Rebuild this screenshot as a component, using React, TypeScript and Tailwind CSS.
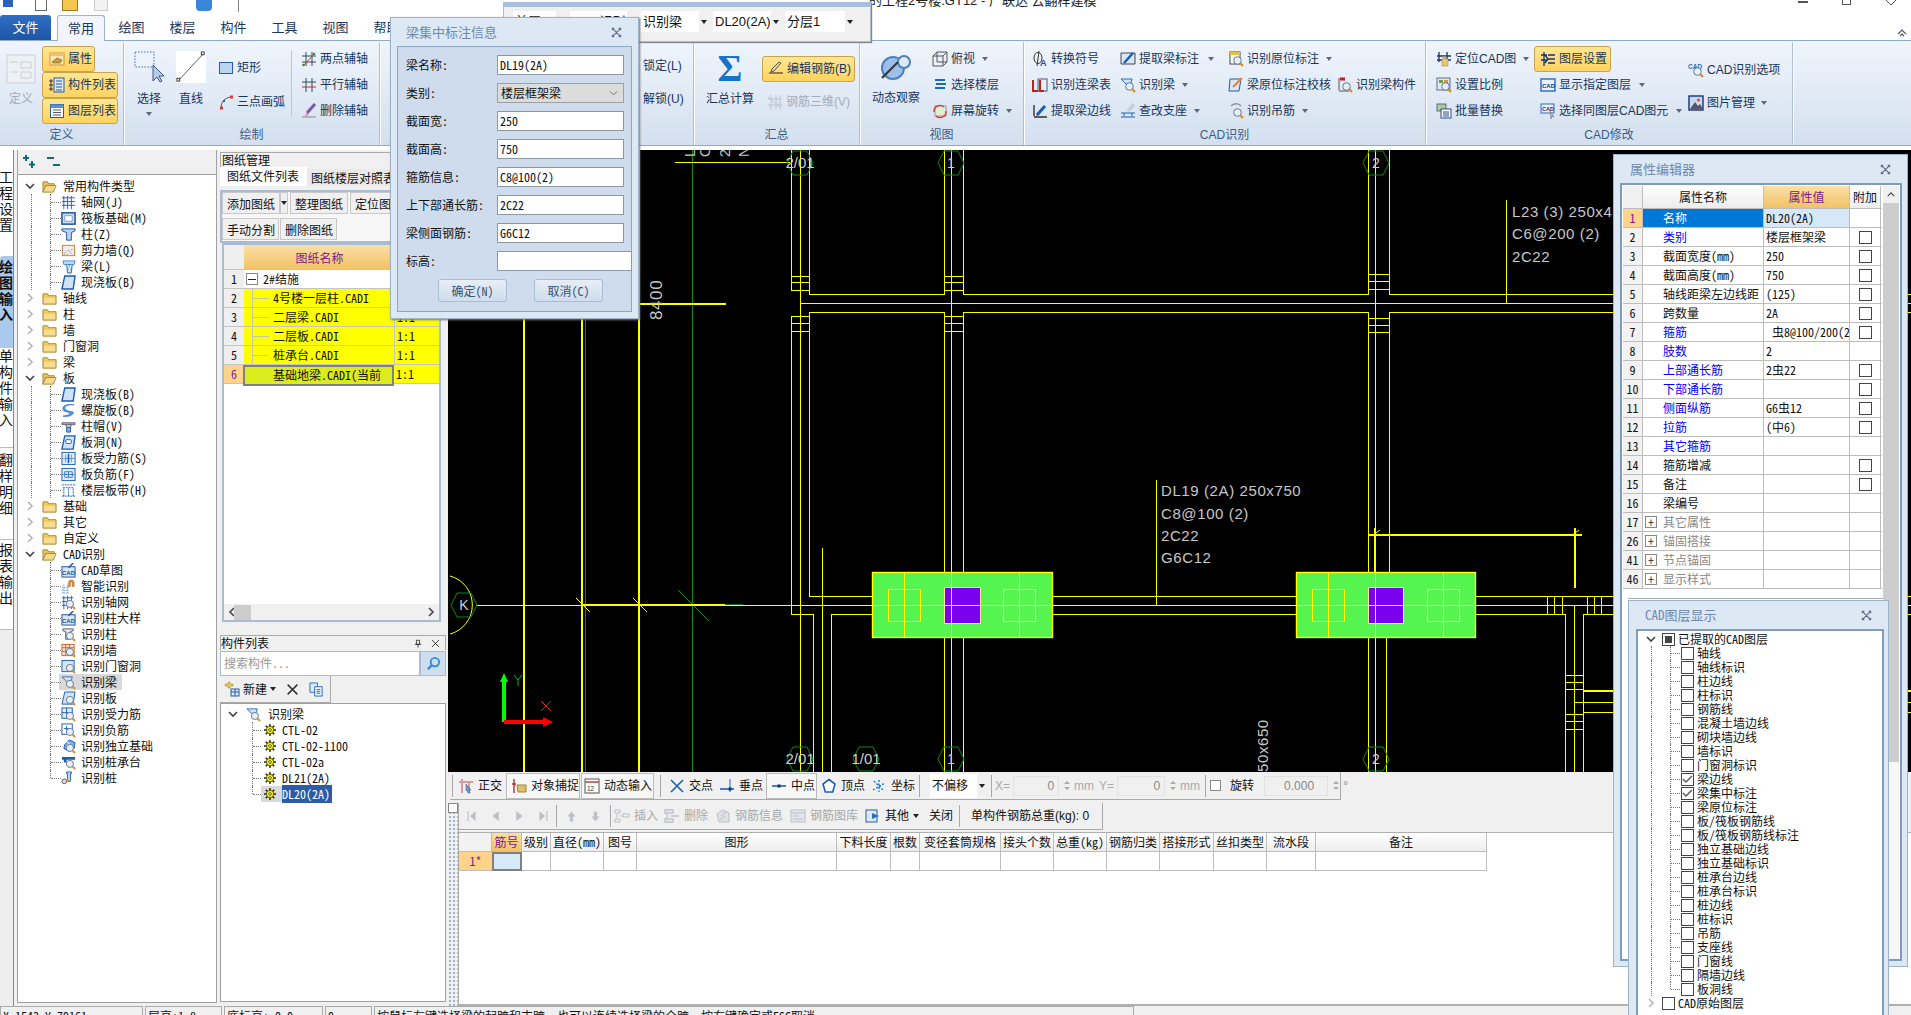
import React from "react";

const ui = "font-['Liberation_Sans','Noto_Sans_CJK_SC',sans-serif]";
const mono = "font-['Noto_Sans_Mono_CJK_SC','Noto_Sans_CJK_SC',monospace]";

const mag = (
  <g>
    <circle cx="9.5" cy="9.5" r="3.8" fill="#e6eef7" stroke="#66788c" />
    <path d="M12.4 12.4 15 15" stroke="#d98e22" strokeWidth="2.2" />
  </g>
);
const cadText = (
  <text x="1" y="13" fontSize="6.5" fontWeight="700" fill="#1c4fa0" fontFamily="Liberation Sans">CAD</text>
);

const icons: Record<string, React.ReactNode> = {
  folderOpen: (<g><path d="M1 3h5l1 2h6v2H4L1 14z" fill="#e9c060" stroke="#a98a3c" /><path d="M4 7h11l-3 7H1z" fill="#f7d98a" stroke="#a98a3c" /></g>),
  folder: (<g><path d="M1 3h5l1 2h8v9H1z" fill="#f2c64f" stroke="#a98a3c" /><path d="M2 7h12v6H2z" fill="#f9dd8e" /></g>),
  grid: <path d="M1 3h14M1 7h14M1 11h14M3 1v14M7 1v14M11 1v14" stroke="#1f5fbf" fill="none" />,
  raft: (<g><rect x="1" y="2" width="14" height="12" fill="#cfe0f5" stroke="#1b4fa0" strokeWidth="1.6" /><rect x="4" y="5" width="8" height="6" fill="#fff" stroke="#1b4fa0" strokeDasharray="1 1" /></g>),
  column: <path d="M1 2h14v2l-4 2v8H6V6L1 4z" fill="#b9d3f2" stroke="#1b4fa0" />,
  wall: (<g><rect x="1.5" y="2.5" width="13" height="11" fill="#f0ece6" stroke="#d07a3a" /><path d="M4 10h1M7 8h1M10 11h1M6 12h1M11 7h1M3 12h1M9 9h1" stroke="#777" /></g>),
  beam: (<g><path d="M2 2h13l-1 4H3z" fill="#bcd6f4" stroke="#4d86c9" /><path d="M6 6h6l-1 9H7z" fill="#8fbbea" stroke="#2f6fb8" /><path d="M7 6l3 8M11 6l-3 8" stroke="#fff" /></g>),
  slab: <path d="M4 1h11l-2 14H1z" fill="#cfe2f8" stroke="#1b5bb0" strokeWidth="1.5" />,
  spiral: <path d="M14 2C7 1 2 4 5 7c3 3 9 1 8 4-1 3-7 4-11 3 4-1 7-1 7-3S2 10 2 6s6-5 12-4z" fill="#4d9be8" stroke="#1b5bb0" strokeWidth=".6" />,
  cap: (<g><path d="M1 4h14v2H1z" fill="#a9b3bf" stroke="#667" /><path d="M5 6h6l-1 3H6z" fill="#cfd6dd" stroke="#667" /><path d="M6 9h4v5H6z" fill="#7fb2e8" stroke="#1b5bb0" /></g>),
  hole: (<g><path d="M4 1h11l-2 14H1z" fill="#cfe2f8" stroke="#1b5bb0" strokeWidth="1.4" /><rect x="5" y="5" width="6" height="4" rx="1" fill="#fff" stroke="#1b5bb0" /></g>),
  rebarS: (<g><rect x="1" y="1.5" width="14" height="13" fill="#e0ecf9" stroke="#1b5bb0" /><path d="M5 4v8M11 4v8M2 8h12" stroke="#5a94d8" /><path d="M8 3v10" stroke="#1b5bb0" strokeWidth="1.6" /></g>),
  rebarF: (<g><rect x="1" y="1.5" width="14" height="13" fill="#e0ecf9" stroke="#1b5bb0" /><path d="M4 5h8v6H4zM8 5v6M2 8h12" stroke="#3a78c8" fill="none" /></g>),
  band: <path d="M1 2h14M1 14h14M3 14V5M8 14V5M13 14V5M2 5h12" stroke="#1b5bb0" fill="none" strokeDasharray="2 1" />,
  cadDraft: (<g><rect x="1" y="4" width="14" height="11" fill="#d5e6f8" stroke="#1b4fa0" />{cadText}<path d="M8 5l5-5" stroke="#1b4fa0" strokeWidth="1.5" /></g>),
  smart: (<g><path d="M1 9h8M1 12h8M1 15h8M3 6v9M7 6v9" stroke="#4d8ad0" strokeDasharray="1 1" /><path d="M8 8V4a3 3 0 0 1 6 0v4h-2V4a1 1 0 0 0-2 0v4z" fill="#e88a20" stroke="#a0581a" strokeWidth=".5" /></g>),
  recGrid: (<g><path d="M1 3h12M1 7h12M1 11h12M3 1v14M7 1v14M11 1v14" stroke="#1f5fbf" fill="none" />{mag}</g>),
  recCad: (<g><rect x="1" y="4" width="14" height="11" fill="#d5e6f8" stroke="#1b4fa0" />{cadText}<path d="M8 5l5-5" stroke="#1b4fa0" strokeWidth="1.5" /></g>),
  recCol: (<g><path d="M2 2h11v2l-3 1v8H5V5L2 4z" fill="#dde8f4" stroke="#556" />{mag}</g>),
  recWall: (<g><rect x="1" y="1.5" width="13" height="12" fill="#f8e2d0" stroke="#d0602a" /><path d="M1 5h13M1 9h13M5 1.5v12M9 1.5v12" stroke="#d0602a" />{mag}</g>),
  recDoor: (<g><rect x="1" y="1.5" width="13" height="12" fill="#d7e6f7" stroke="#1b5bb0" />{mag}</g>),
  recBeam: (<g><path d="M1 2h11l-1 4-5 1z" fill="#cfe2f8" stroke="#2f6fb8" />{mag}</g>),
  recSlab: (<g><path d="M4 1h11l-2 13H1z" fill="#cfe2f8" stroke="#1b5bb0" />{mag}</g>),
  recS: (<g><rect x="1" y="1" width="11" height="11" fill="#e0ecf9" stroke="#1b5bb0" /><path d="M1 6h11M6 1v11" stroke="#1b5bb0" />{mag}</g>),
  recF: (<g><rect x="1" y="1" width="11" height="11" fill="#fff" stroke="#1b5bb0" /><path d="M3 6h7M6 3v7" stroke="#1b5bb0" />{mag}</g>),
  recIso: (<g><path d="M4 6l5-5 6 3-1 6-6 3-5-3z" fill="#7fb2e8" stroke="#1b4fa0" /><path d="M6 3l7 5" stroke="#fff" />{mag}</g>),
  recCap: (<g><path d="M1 2h14v3H6v3H3V5H1z" fill="#1b5bb0" />{mag}</g>),
  recPile: (<g><path d="M6 1h5v2h-1v8H7V3H6z" fill="#cfe2f8" stroke="#1b5bb0" /><circle cx="3.5" cy="11" r="2.5" fill="#dde" stroke="#556" /><path d="M5 10h3" stroke="#d98e22" strokeWidth="2" /></g>),
  gear: (<g><path d="M8 0v16M0 8h16M2.300 2.300l11.400 11.400M13.700 2.300 2.300 13.700" stroke="#222" strokeWidth="2" /><circle cx="8" cy="8" r="5" fill="#f4f000" stroke="#3a3a00" /><circle cx="8" cy="8" r="1.8" fill="#fff" stroke="#333" /></g>),
  prop: (<g><rect x="1" y="2" width="14" height="12" fill="#fbe6bd" stroke="#d9902a" /><path d="M1 2h14v3H1z" fill="#f3c06a" /><path d="M3 11l5-4 5 2-2 3H4z" fill="#c99a3c" stroke="#7b5a16" strokeWidth=".6" /></g>),
  list: (<g><path d="M1 3h2v2H1zM1 7h2v2H1zM1 11h2v2H1z" fill="none" stroke="#334" /><rect x="5" y="1" width="10" height="14" fill="#dbe9f8" stroke="#2a5a9a" /><path d="M7 4h6M7 7h6M7 10h6M7 13h6" stroke="#2a5a9a" /></g>),
  layer: (<g><rect x="1.5" y="1.5" width="13" height="13" fill="#fff" stroke="#2a5a9a" /><path d="M1.5 1.5h13V5h-13z" fill="#5d8fd0" /><path d="M4 7h8M4 9.5h8M4 12h8" stroke="#557" /></g>),
  rect: <rect x="1.5" y="2.5" width="13" height="11" fill="#bcd4f4" stroke="#2a5aa8" />,
  arc: (<g><path d="M3 14C3 8 7 3 14 3" stroke="#555" fill="none" /><rect x="12" y="1.5" width="3" height="3" fill="#e33" /><rect x="2" y="12.5" width="3" height="3" fill="#e33" /><rect x="5" y="6" width="2" height="2" fill="#2a5aa8" /></g>),
  axis2: (<g><path d="M5 1v14M11 1v14M1 5h14M1 11h14" stroke="#2f4f5f" /><path d="M2 15 14 2" stroke="#e03030" /><circle cx="2.5" cy="14" r="1.3" fill="#4a8a30" /><circle cx="13" cy="3" r="1.3" fill="#4a8a30" /></g>),
  axisP: (<g><path d="M5 1v14M11 1v14M1 5h14" stroke="#2f4f5f" fill="none" /><path d="M1 10h14" stroke="#c03030" /></g>),
  axisD: (<g><path d="M1 14h14" stroke="#889" /><path d="M14 1 6 10" stroke="#7a5ab0" strokeWidth="3" /><path d="M6 10l-3 4 5-2z" fill="#e88aa0" /></g>),
  edit: (<g><path d="M1 12h14" stroke="#222" /><path d="M13 2 6 10l-3 1 1-3 7-7z" fill="#e8d9a0" stroke="#555" /></g>),
  r3d: <path d="M1 5h14M1 11h14M4 1v14M9 1v14M13 1v14M1 3l13 11" stroke="#c0c4ca" fill="none" />,
  orbit: (<g><circle cx="6.5" cy="8" r="5.5" fill="#9cc0ea" stroke="#4d7fb8" /><circle cx="12" cy="5" r="3" fill="#dbe9f8" stroke="#4d7fb8" /><path d="M1 13 9 5" stroke="#333" strokeWidth="1" /></g>),
  top: (<g><path d="M5 1h10v10H5z" fill="#e8f0fa" stroke="#555" /><path d="M1 5h10v10H1zM1 5l4-4M11 5l4-4M11 15l4-4" fill="none" stroke="#555" /></g>),
  floor: <path d="M3 3h10M4 7h10M3 11h10" stroke="#1b6bb0" strokeWidth="2" fill="none" />,
  rotate: (<g><rect x="3" y="3" width="11" height="10" fill="#dff0d0" stroke="#99a" /><path d="M2 9a6 6 0 0 1 10-5M14 8a6 6 0 0 1-10 5" stroke="#e03030" strokeWidth="1.4" fill="none" /></g>),
  conv: (<g><ellipse cx="6" cy="7" rx="4" ry="5.5" fill="none" stroke="#333" /><path d="M7 0 5 15" stroke="#333" /><text x="8" y="15" fontSize="9" fontWeight="700" fill="#1c4fa0" fontFamily="Liberation Sans">A</text></g>),
  lian: (<g><rect x="6" y="2" width="9" height="12" fill="#e8f0fa" stroke="#557" /><path d="M1 3v11h5M8 3v11h4" stroke="#c02020" strokeWidth="2" fill="none" /></g>),
  extEdge: (<g><path d="M2 2v11M2 14h13" stroke="#333" strokeWidth="1.4" /><path d="M5 12 13 3" stroke="#1c5fb0" strokeWidth="3" /><path d="M5 12l-2 2 3-1z" fill="#c03030" /></g>),
  extLabel: (<g><path d="M1 2h14v11H1z" fill="#d8e6f6" stroke="#445" /><path d="M4 12 13 2" stroke="#1c5fb0" strokeWidth="2.5" /></g>),
  checkSup: (<g><path d="M1 10h14M4 13v-3M12 13v-3M1 14h14" stroke="#1c5fb0" /><path d="M14 1 8 8" stroke="#c8ccd4" strokeWidth="3.5" /></g>),
  orig: (<g><rect x="2" y="1" width="10" height="12" fill="#fff" stroke="#445" /><path d="M2 1h10v3H2z" fill="#e8c040" />{mag}</g>),
  origCheck: (<g><path d="M2 2h11l-2 12H1z" fill="#d8e6f6" stroke="#1c5fb0" /><path d="M5 10 14 1" stroke="#e08040" strokeWidth="2" /></g>),
  hanger: (<g><path d="M3 3c3-3 8-3 10 0" stroke="#8a96a4" fill="none" strokeWidth="1.5" />{mag}</g>),
  recB: (<g><path d="M2 1v12M2 14h10" stroke="#555" /><path d="M3 2h5" stroke="#c02020" strokeWidth="3" />{mag}</g>),
  locate: (<g><path d="M3 1v10M11 1v10M1 5h14M1 9h14" stroke="#1c2f7a" strokeWidth="1.3" /><path d="M6 15V8h1V5h1v3h1V5h1v3h2v7z" fill="#e8c870" stroke="#a08030" strokeWidth=".5" /></g>),
  scale: (<g><rect x="1" y="1" width="13" height="12" fill="#dbe9f8" stroke="#668" /><rect x="3" y="3" width="4" height="3" fill="#6aa04a" /><rect x="8" y="3" width="4" height="3" fill="#e09040" />{mag}</g>),
  batch: (<g><rect x="1" y="1" width="9" height="7" fill="#a8d090" stroke="#668" /><rect x="5" y="6" width="10" height="9" fill="#fff" stroke="#2a4a8a" /><path d="M7 9h6M7 11h6M7 13h6" stroke="#2a4a8a" /></g>),
  layerSet: <path d="M4 1v14M1 4h6M1 9h6M8 4h7M8 8h7M8 12h7M5 4l3 4-3 4" stroke="#14307a" strokeWidth="1.3" fill="none" />,
  showL: (<g><rect x="1" y="2" width="14" height="12" fill="#e8f0fa" stroke="#2a6ac0" strokeWidth="1.4" /><text x="2" y="11" fontSize="6" fontWeight="700" fill="#14307a" fontFamily="Liberation Sans">CAD</text></g>),
  sameL: (<g><rect x="1" y="1" width="13" height="9" fill="#e8f0fa" stroke="#2a6ac0" /><text x="2" y="8" fontSize="5.5" fontWeight="700" fill="#14307a" fontFamily="Liberation Sans">CAD</text><path d="M10 8l4 6-2-1-1 3z" fill="#bbb" stroke="#666" strokeWidth=".5" /></g>),
  cadOpt: (<g><text x="0" y="7" fontSize="6.5" fontWeight="700" fill="#2a6ac0" fontFamily="Liberation Sans">CAD</text>{mag}</g>),
  pic: (<g><rect x="1" y="1" width="14" height="14" fill="#c8daf0" stroke="#14307a" strokeWidth="1.4" /><circle cx="10.5" cy="5" r="1.6" fill="#e05030" /><path d="M2 14l5-7 3 4 2-2 3 5z" fill="#556" /></g>),
  ortho: (<g><path d="M1 4h14M4 1v14M11 4v11" stroke="#d89a9a" strokeWidth="2" /><path d="M8 6l5 6-2 0 1 3-2 0-1-3-1 1z" fill="#6d9ad8" stroke="#335" strokeWidth=".4" /></g>),
  snap: (<g><path d="M3 1v14M1 6h4" stroke="#b03030" strokeWidth="1.4" /><path d="M6 7h9v7H7z" fill="#e0c070" stroke="#a08030" /></g>),
  dyn: (<g><rect x="1" y="1" width="14" height="14" fill="#fff" stroke="#555" /><path d="M1 4h14" stroke="#c03030" strokeWidth="1.4" /><text x="3" y="13" fontSize="6.5" fill="#333" fontFamily="Liberation Sans">12</text></g>),
  cross: <path d="M2 2l12 12M14 2 2 14" stroke="#1c5fb0" strokeWidth="1.6" />,
  perp: (<g><path d="M1 11h14" stroke="#1c5fb0" strokeWidth="1.6" /><path d="M11 1v13" stroke="#1c5fb0" /><rect x="9.5" y="9.5" width="3" height="3" fill="#14307a" /></g>),
  mid: (<g><path d="M1 8h14" stroke="#1c5fb0" strokeWidth="1.6" /><rect x="6.5" y="6.5" width="3" height="3" fill="#14307a" /></g>),
  vert: <path d="M8 1.5l6 4.5-2.3 8H4.3L2 6z" fill="#fff" stroke="#1c5fb0" strokeWidth="1.6" />,
  coord: <path d="M8 2v12M2 12 14 5M3 3l10 10" stroke="#1c7ad8" strokeWidth="1.4" strokeDasharray="2 1.5" />,
  first: <path d="M3 2v12h1.5V2zM13 2 6 8l7 6z" fill="#bbbfc6" />,
  prev: <path d="M12 2 4 8l8 6z" fill="#bbbfc6" />,
  next: <path d="M4 2l8 6-8 6z" fill="#bbbfc6" />,
  last: <path d="M3 2l7 6-7 6zM11.5 2v12H13V2z" fill="#bbbfc6" />,
  up: <path d="M8 2l5 6h-3v6H6V8H3z" fill="#bbbfc6" />,
  down: <path d="M8 14l5-6h-3V2H6v6H3z" fill="#bbbfc6" />,
  ins: <path d="M1 2h5v3H1zM1 11h5v3H1zM9 6h6v3H9zM3 6v4M6 8h3" stroke="#bbbfc6" fill="none" />,
  del: <path d="M1 2h8v3H1zM1 11h8v3H1zM3 6v4M7 8h8" stroke="#bbbfc6" fill="none" strokeWidth="1.3" />,
  rInfo: <path d="M2 6l6-4 6 3v9H4zM6 8l5-4M5 12l5-4" stroke="#bbbfc6" fill="#dfe1e4" />,
  rLib: (<g><rect x="1" y="2" width="14" height="12" fill="#e4e6e9" stroke="#bbbfc6" /><path d="M1 5h14M3 8h6M3 11h10" stroke="#bbbfc6" /></g>),
  other: (<g><rect x="1" y="2" width="11" height="12" fill="#dbe9f8" stroke="#2a5a9a" /><path d="M7 5l7 3-7 3z" fill="#2a6ac0" /></g>),
  plus: <path d="M4 1v6M1 4h6M10 7v7M7 10.500h6" stroke="#0c6f6f" strokeWidth="2" fill="none" />,
  minus: <path d="M1 4h7M7 11h7" stroke="#0c6f6f" strokeWidth="2" fill="none" />,
  newIc: (<g><path d="M2 2h3V0h2v2h3v2H7v2H5V4H2z" fill="#f2c64f" stroke="#a08030" strokeWidth=".5" transform="translate(-1 1)" /><rect x="7" y="8" width="8" height="7" fill="#dbe9f8" stroke="#2a5a9a" /><path d="M7 11h8M11 8v7" stroke="#2a5a9a" /></g>),
  delX: <path d="M2 2l12 12M14 2 2 14" stroke="#333" strokeWidth="1.8" />,
  copy: (<g><path d="M1 1h8v10H1z" fill="#dbe9f8" stroke="#2a6ac0" /><path d="M6 5h8v10H6z" fill="#eef4fb" stroke="#2a6ac0" /><path d="M8 8h4M8 10h4M8 12h4" stroke="#2a6ac0" /></g>),
  search: (<g><circle cx="9.500" cy="6.500" r="4.500" fill="none" stroke="#2a90e0" strokeWidth="2" /><path d="M6 10l-4 4" stroke="#2a90e0" strokeWidth="2.500" /></g>),
};

function I({ n, c = "w-4 h-4" }: { n: string; c?: string }) {
  return (
    <svg viewBox="0 0 16 16" className={`${c} shrink-0`}>
      {icons[n]}
    </svg>
  );
}

function Caret({ c = "text-[#5a6a7c]" }: { c?: string }) {
  return <span className={`block w-0 h-0 border-x-[3px] border-x-transparent border-t-[4px] border-t-current ${c}`} />;
}

function RB({ n, t, arrow, on, off, c = "" }: { n: string; t: string; arrow?: string; on?: boolean; off?: boolean; c?: string }) {
  const active = on ? "bg-linear-to-b from-[#ffe792] to-[#ffd35e] border border-[#c8a24c] rounded-[3px]" : "";
  return (
    <div className={`flex items-center h-[26px] shrink-0 whitespace-nowrap ${active} ${off ? "text-[#a5adb8]" : ""} ${c}`}>
      <I n={n} />
      <span className="ml-[3px]">{t}</span>
      {arrow && <span className={arrow}><Caret /></span>}
    </div>
  );
}

function Group({ w, label, children }: { w: string; label: string; children: React.ReactNode }) {
  return (
    <div className={`${w} shrink-0 h-full flex flex-col border-r border-[#aebfd4] shadow-[1px_0_0_#fff]`}>
      <div className="flex-1 flex min-h-0">{children}</div>
      <div className="h-[17px] mb-[1px] shrink-0 text-center text-[#3e5c82] leading-[17px]">{label}</div>
    </div>
  );
}

function Ribbon() {
  return (
    <div className="h-[106px] pt-px flex border-y border-[#8fa9c8] bg-linear-to-b from-[#f0f5fc] to-[#d3e0ef] text-[12px] text-[#17365c]">
      <Group w="w-[124px]" label="定义">
        <div className="w-[42px] flex flex-col items-center pt-[12px] text-[#a5adb8]">
          <svg viewBox="0 0 30 30" className="w-[30px] h-[30px] shrink-0"><rect x="1" y="1" width="28" height="28" fill="#eef0f3" stroke="#ccd2d9" /><path d="M4 8h8M15 8h10v6H15zM4 18h8M15 18h10v6H15z" stroke="#c8cfd8" fill="none" /></svg>
          <span className="mt-[6px]">定义</span>
        </div>
        <div className="pt-[4px] flex flex-col items-start">
          <RB n="prop" t="属性" on c="w-[53px] pl-[6px] h-[25px]" />
          <RB n="list" t="构件列表" on c="w-[76px] pl-[6px]" />
          <RB n="layer" t="图层列表" on c="w-[76px] pl-[6px]" />
        </div>
      </Group>
      <Group w="w-[256px]" label="绘制">
        <div className="w-[30px] ml-[10px] pt-[9px] flex flex-col items-center">
          <svg viewBox="0 0 30 36" className="w-[30px] h-[36px] shrink-0"><rect x="1" y="1" width="19" height="15" fill="#edf3fb" stroke="#3a70b8" strokeDasharray="1.500 1.500" /><path d="M19 14v16l4-4 3 5 2-1-3-5h5z" fill="#b8cce8" stroke="#3a5a8a" /></svg>
          <span className="mt-[3px]">选择</span>
          <span className="mt-[4px] h-[5px] block"><Caret /></span>
        </div>
        <div className="w-[32px] ml-[11px] pt-[9px] flex flex-col items-center">
          <svg viewBox="0 0 32 34" className="w-[32px] h-[32px] shrink-0"><rect width="32" height="34" fill="#fff" /><path d="M3 31 29 3" stroke="#555" /><rect x="1" y="29" width="3" height="3" fill="#fff" stroke="#333" /><rect x="27" y="1" width="3" height="3" fill="#fff" stroke="#333" /></svg>
          <span className="mt-[7px]">直线</span>
        </div>
        <div className="ml-[11px] w-[74px] mt-[9px] h-[66px] pt-[4px] flex flex-col gap-[8px] border-r border-[#b9c6d6]">
          <RB n="rect" t="矩形" />
          <RB n="arc" t="三点画弧" />
        </div>
        <div className="ml-[9px] pt-[4px] flex flex-col">
          <RB n="axis2" t="两点辅轴" />
          <RB n="axisP" t="平行辅轴" />
          <RB n="axisD" t="删除辅轴" />
        </div>
      </Group>
      <Group w="w-[314px]" label="修改">
        <div className="ml-[263px] pt-[11px] flex flex-col whitespace-nowrap">
          <span className="h-[33px] leading-[26px]">锁定(L)</span>
          <span className="h-[33px] leading-[26px]">解锁(U)</span>
        </div>
      </Group>
      <Group w="w-[166px]" label="汇总">
        <div className="w-[60px] pt-[7px] ml-[6px] flex flex-col items-center">
          <span className="h-[38px] shrink-0 text-[38px] leading-[38px] font-['Liberation_Serif'] font-bold text-[#1573c8]">Σ</span>
          <span className="mt-[3px] whitespace-nowrap">汇总计算</span>
        </div>
        <div className="ml-[2px] pt-[14px] flex flex-col gap-[7px]">
          <RB n="edit" t="编辑钢筋(B)" on c="w-[93px] pl-[5px]" />
          <RB n="r3d" t="钢筋三维(V)" off c="pl-[5px]" />
        </div>
      </Group>
      <Group w="w-[164px]" label="视图">
        <div className="w-[48px] ml-[12px] pt-[10px] flex flex-col items-center">
          <I n="orbit" c="w-[32px] h-[32px]" />
          <span className="mt-[5px] whitespace-nowrap">动态观察</span>
        </div>
        <div className="ml-[12px] pt-[4px] flex flex-col">
          <RB n="top" t="俯视" arrow="ml-[7px]" />
          <RB n="floor" t="选择楼层" />
          <RB n="rotate" t="屏幕旋转" arrow="ml-[7px]" />
        </div>
      </Group>
      <Group w="w-[402px]" label="CAD识别">
        <div className="ml-[8px] pt-[4px] w-[88px] flex flex-col">
          <RB n="conv" t="转换符号" />
          <RB n="lian" t="识别连梁表" />
          <RB n="extEdge" t="提取梁边线" />
        </div>
        <div className="pt-[4px] w-[108px] flex flex-col">
          <RB n="extLabel" t="提取梁标注" arrow="ml-[9px]" />
          <RB n="recBeam" t="识别梁" arrow="ml-[7px]" />
          <RB n="checkSup" t="查改支座" arrow="ml-[7px]" />
        </div>
        <div className="pt-[4px] w-[107px] flex flex-col">
          <RB n="orig" t="识别原位标注" arrow="ml-[7px]" />
          <RB n="origCheck" t="梁原位标注校核" />
          <RB n="hanger" t="识别吊筋" arrow="ml-[7px]" />
        </div>
        <div className="pt-[30px] ml-[2px]">
          <RB n="recB" t="识别梁构件" />
        </div>
      </Group>
      <Group w="w-[367px]" label="CAD修改">
        <div className="ml-[10px] pt-[4px] w-[98px] flex flex-col">
          <RB n="locate" t="定位CAD图" arrow="ml-[7px]" />
          <RB n="scale" t="设置比例" />
          <RB n="batch" t="批量替换" />
        </div>
        <div className="pt-[4px] w-[154px] flex flex-col items-start">
          <RB n="layerSet" t="图层设置" on c="w-[77px] pl-[5px]" />
          <RB n="showL" t="显示指定图层" arrow="ml-[8px]" c="pl-[6px]" />
          <RB n="sameL" t="选择同图层CAD图元" arrow="ml-[8px]" c="pl-[6px]" />
        </div>
        <div className="pt-[15px] flex flex-col gap-[7px]">
          <RB n="cadOpt" t="CAD识别选项" />
          <RB n="pic" t="图片管理" arrow="ml-[6px]" />
        </div>
      </Group>
    </div>
  );
}

function TopBar() {
  const tabs = ["绘图", "楼层", "构件", "工具", "视图", "帮助"];
  return (
    <div className="h-[40px] relative bg-white text-[13px] text-[#1f3657]">
      <div className="h-[15px] flex items-center pl-[3px] gap-[10px] overflow-hidden">
        <span className="w-[10px] h-[7px] -mt-[8px] bg-[#2a62b8]" />
        <span className="ml-[12px] w-[12px] h-[14px] -mt-[8px] border border-[#667] bg-white" />
        <span className="ml-[5px] w-[16px] h-[14px] -mt-[8px] border border-[#a07a20] bg-[#f2c64f]" />
        <span className="ml-[6px] w-[14px] h-[14px] -mt-[8px] border border-[#ccc] bg-[#f2f2f2]" />
        <span className="ml-[78px] w-[16px] h-[14px] -mt-[8px] rounded-sm bg-[#3a86d8]" />
        <span className="ml-[16px] w-px h-[12px] -mt-[4px] bg-[#888]" />
      </div>
      <div className="absolute left-[869px] top-[-9px] text-[13px] text-[#222] whitespace-nowrap">的工程2号楼.GT12 - 广联达 云翻样建模</div>
      <div className="absolute right-[14px] top-[0px] flex items-start gap-[34px]">
        <span className="w-[10px] h-[2px] mt-[1px] bg-[#555]" />
        <span className="w-[9px] h-[5px] border-x border-b border-[#555]" />
        <svg viewBox="0 0 12 6" className="w-[12px] h-[6px]"><path d="M1 0l5 5 5-5" stroke="#555" fill="none" /></svg>
      </div>
      <svg viewBox="0 0 10 10" className="absolute left-[1897px] top-[27px] w-[10px] h-[10px]"><path d="M1 7l4-4 4 4M3 9l2-2 2 2" stroke="#4a5a70" fill="none" strokeWidth="1.2" /></svg>
      <div className="flex items-end h-[25px]">
        <div className="w-[51px] h-[25px] rounded-t-[3px] bg-linear-to-b from-[#2f6ec4] to-[#1f56a6] text-white text-center leading-[25px]">文件</div>
        <div className="ml-[6px] w-[48px] h-[26px] -mb-px z-10 rounded-t-[3px] border border-b-0 border-[#9cb4d0] bg-[#f2f6fc] text-center leading-[25px]">常用</div>
        <div className="flex ml-[1px]">
          {tabs.map((t) => (
            <div key={t} className="w-[51px] text-center leading-[25px]">{t}</div>
          ))}
        </div>
      </div>
    </div>
  );
}

type Node = { t: string; lv: 0 | 1; ic: string; open?: boolean; outer?: boolean; sel?: boolean; last?: boolean };
const tree: Node[] = [
  { t: "常用构件类型", lv: 0, ic: "folderOpen", open: true },
  ...[["轴网(J)", "grid"], ["筏板基础(M)", "raft"], ["柱(Z)", "column"], ["剪力墙(Q)", "wall"], ["梁(L)", "beam"], ["现浇板(B)", "slab"]].map(([t, ic]) => ({ t, ic, lv: 1 as const, outer: true })),
  ...["轴线", "柱", "墙", "门窗洞", "梁"].map((t) => ({ t, lv: 0 as const, ic: "folder" })),
  { t: "板", lv: 0, ic: "folderOpen", open: true },
  ...[["现浇板(B)", "slab"], ["螺旋板(B)", "spiral"], ["柱帽(V)", "cap"], ["板洞(N)", "hole"], ["板受力筋(S)", "rebarS"], ["板负筋(F)", "rebarF"], ["楼层板带(H)", "band"]].map(([t, ic]) => ({ t, ic, lv: 1 as const, outer: true })),
  ...["基础", "其它", "自定义"].map((t) => ({ t, lv: 0 as const, ic: "folder" })),
  { t: "CAD识别", lv: 0, ic: "folderOpen", open: true },
  ...[["CAD草图", "cadDraft"], ["智能识别", "smart"], ["识别轴网", "recGrid"], ["识别柱大样", "recCad"], ["识别柱", "recCol"], ["识别墙", "recWall"], ["识别门窗洞", "recDoor"], ["识别梁", "recBeam"], ["识别板", "recSlab"], ["识别受力筋", "recS"], ["识别负筋", "recF"], ["识别独立基础", "recIso"], ["识别桩承台", "recCap"], ["识别桩", "recPile"]].map(([t, ic]) => ({ t, ic, lv: 1 as const, sel: t === "识别梁", last: t === "识别桩" })),
];

function Chev({ open }: { open?: boolean }) {
  return (
    <svg viewBox="0 0 10 10" className="w-[10px] h-[10px] shrink-0">
      <path d={open ? "M1 3l4 4 4-4" : "M3 1l4 4-4 4"} stroke={open ? "#444" : "#b5b5b5"} strokeWidth="1.6" fill="none" />
    </svg>
  );
}

function TreePanel() {
  return (
    <div className="w-[200px] ml-[3px] flex flex-col h-[853px] border-x border-b border-[#a0a0a0] bg-white">
      <div className="h-[25px] bg-[#f0f0f0] border-b border-[#a0a0a0] flex items-center pl-[4px] gap-[8px]">
        <I n="plus" c="w-[16px] h-[16px]" />
        <I n="minus" c="w-[16px] h-[16px]" />
      </div>
      <div className={`pt-[3px] text-[12px] text-[#111] ${mono}`}>
        {tree.map((n, i) => (
          <div key={i} className="relative flex items-center h-[16px]">
            {n.lv === 0 ? (
              <>
                <span className="ml-[7px]"><Chev open={n.open} /></span>
                <span className="ml-[7px]"><I n={n.ic} c="w-[15px] h-[15px]" /></span>
                <span className="ml-[6px] leading-[16px]">{n.t}</span>
              </>
            ) : (
              <>
                {n.outer && <span className="absolute left-[13px] top-0 h-[16px] border-l border-dotted border-[#777]" />}
                <span className={`absolute left-[32px] top-0 border-l border-dotted border-[#777] ${n.last ? "h-[8px]" : "h-[16px]"}`} />
                <span className="absolute left-[33px] top-[8px] w-[10px] border-t border-dotted border-[#777]" />
                <span className={`ml-[41px] h-[16px] flex items-center pl-[2px] w-[fit-content] ${n.sel ? "bg-[#d9d9d9] pr-[5px]" : ""}`}>
                  <I n={n.ic} c="w-[15px] h-[15px]" />
                  <span className="ml-[5px] leading-[16px] whitespace-nowrap">{n.t}</span>
                </span>
              </>
            )}
          </div>
        ))}
      </div>
    </div>
  );
}

function SideTabs() {
  const one = (s: string) => (
    <div className="flex flex-col items-start">
      {s.split("").map((ch, i) => (
        <span key={i} className="h-[16px] text-[14px] leading-[16px] -ml-[1px]">{ch}</span>
      ))}
    </div>
  );
  return (
    <div className="w-[14px] shrink-0 bg-[#eeeeee] border-r border-[#888] flex flex-col text-[#111] overflow-hidden">
      <div className="h-[106px] bg-white pt-[19px]">{one("工程设置")}</div>
      <div className="h-[92px] bg-[#a9c9ef] pt-[3px] font-bold rounded-tl-[4px]">{one("绘图输入")}</div>
      <div className="h-[100px] bg-white border-b border-[#bbb]">{one("单构件输入")}</div>
      <div className="h-[92px] bg-white pt-[4px] border-b border-[#bbb]">{one("翻样明细")}</div>
      <div className="h-[90px] bg-white pt-[2px] border-b border-[#bbb]">{one("报表输出")}</div>
      <div className="flex-1" />
    </div>
  );
}

const rows = [
  { n: "2", t: "4号楼一层柱.CADI" },
  { n: "3", t: "二层梁.CADI" },
  { n: "4", t: "二层板.CADI" },
  { n: "5", t: "桩承台.CADI" },
];

function Btn({ t, c = "" }: { t: string; c?: string }) {
  return <div className={`h-[22px] px-[4px] bg-[#f0f0f0] border border-[#c8c8c8] leading-[21px] whitespace-nowrap ${c}`}>{t}</div>;
}

function MiddleColumn() {
  return (
    <div className={`w-[228px] ml-[3px] shrink-0 flex flex-col text-[12px] text-[#111] ${mono}`}>
      <div className="h-[15px] mt-[2px] mr-[2px] bg-[#f0f0f0] border border-[#aaa] border-b-0 leading-[14px] pl-[1px]">图纸管理</div>
      <div className="flex h-[19px] items-end mr-[2px]">
        <div className="w-[87px] h-[19px] bg-white pl-[7px] leading-[18px]">图纸文件列表</div>
        <div className="flex-1 overflow-hidden h-[17px] bg-[#eaeaea] pl-[4px] leading-[17px] whitespace-nowrap">图纸楼层对照表</div>
      </div>
      <div className="border-2 border-[#a9bcd4] border-b-0 border-r-0 mt-[4px] mr-[2px] bg-[#f7f7f7] h-[51px] overflow-hidden">
        <div className="flex h-[26px] gap-[2px]">
          <Btn t="添加图纸" c="w-[58px]" />
          <div className="w-[8px] -ml-[2px] h-[22px] bg-[#f0f0f0] border border-[#c8c8c8] flex items-center justify-center"><Caret c="text-[#222]" /></div>
          <Btn t="整理图纸" c="w-[58px]" />
          <Btn t="定位图纸" c="w-[60px]" />
        </div>
        <div className="flex gap-[1px]">
          <Btn t="手动分割" c="w-[57px]" />
          <Btn t="删除图纸" c="w-[57px]" />
        </div>
      </div>
      <div className="h-[2px] mr-[2px] bg-[#a9bcd4]" />
      <div className="ml-[2px] mr-[7px] h-[379px] border-2 border-[#a9bcd4] bg-white flex flex-col overflow-hidden">
        <div className="flex h-[25px] border-b border-[#c4c4c4]">
          <div className="w-[20px] bg-[#efefef]" />
          <div className="w-[151px] bg-linear-to-b from-[#fbdfa5] to-[#f2c264] text-center leading-[25px] text-[#7a1a8a]">图纸名称</div>
          <div className="flex-1 bg-linear-to-b from-[#fbdfa5] to-[#f2c264]" />
        </div>
        <div className="flex h-[19px] border-b border-[#c4c4c4]">
          <div className="w-[20px] bg-[#efefef] text-center leading-[18px]">1</div>
          <div className="flex items-center pl-[2px]">
            <span className="w-[12px] h-[12px] border border-[#888] flex items-center justify-center"><span className="w-[8px] h-px bg-[#222]" /></span>
            <span className="ml-[5px]">2#结施</span>
          </div>
        </div>
        {rows.map((r) => (
          <div key={r.n} className="flex h-[19px] border-b border-[#c4c4c4] bg-[#ffff00]">
            <div className="w-[20px] bg-[#efefef] text-center leading-[18px]">{r.n}</div>
            <div className="w-[151px] relative pl-[29px] leading-[18px] border-r border-[#c4c4c4] whitespace-nowrap">
              <span className="absolute left-[8px] top-0 h-[18px] border-l border-[#c8c8a0]" />
              <span className="absolute left-[9px] top-[9px] w-[16px] border-t border-[#c8c8a0]" />
              {r.t}
            </div>
            <div className="pl-[2px] leading-[18px]">1:1</div>
          </div>
        ))}
        <div className="flex h-[19px] bg-[#ffff00] border-b border-[#c4c4c4]">
          <div className="w-[20px] bg-[#ffd48a] text-[#7a1a8a] text-center leading-[18px]">6</div>
          <div className="w-[151px] h-[21px] relative -ml-px border-[2px] border-[#808080] bg-[#dceb1c] pl-[28px] leading-[15px] whitespace-nowrap overflow-hidden">基础地梁.CADI(当前</div>
          <div className="pl-[2px] leading-[18px]">1:1</div>
        </div>
        <div className="flex-1" />
        <div className="h-[16px] bg-[#f0f0f0] flex items-center justify-between px-[4px] text-[#555]">
          <svg viewBox="0 0 8 10" className="w-[8px] h-[10px]"><path d="M6 1 2 5l4 4" stroke="#444" strokeWidth="1.600" fill="none" /></svg>
          <span className="w-[17px] h-[15px] bg-[#cdcdcd] -ml-[178px]" />
          <svg viewBox="0 0 8 10" className="w-[8px] h-[10px]"><path d="M2 1l4 4-4 4" stroke="#444" strokeWidth="1.600" fill="none" /></svg>
        </div>
      </div>
      <div className="h-[13px]" />
      <div className="h-[15px] flex items-center bg-[#f0f0f0] border border-[#aaa] border-b-0 pr-[5px] mr-[2px] leading-[14px]">
        <span>构件列表</span>
        <span className="flex-1" />
        <svg viewBox="0 0 10 10" className="w-[8px] h-[9px] mr-[9px]"><path d="M3 1h4v5H3zM1 6h8M5 6v4" stroke="#222" fill="none" /></svg>
        <svg viewBox="0 0 10 10" className="w-[9px] h-[9px]"><path d="M1 1l8 8M9 1 1 9" stroke="#333" fill="none" /></svg>
      </div>
      <div className="h-[25px] mt-px flex mr-[2px] bg-[#cfdeef] border border-[#a9bcd4]">
        <div className="flex-1 bg-white border-r-2 border-[#a9bcd4] pl-[3px] text-[#999] leading-[22px] text-[12px]">搜索构件...</div>
        <div className="w-[24px] flex items-center justify-center"><I n="search" c="w-[15px] h-[15px]" /></div>
      </div>
      <div className="w-[111px] h-[27px] bg-[#f0f0f0] border-r border-b border-[#aaa] flex items-center pl-[4px]">
        <I n="newIc" c="w-[16px] h-[16px]" />
        <span className="ml-[3px]">新建</span>
        <span className="ml-[3px]"><Caret c="text-[#222]" /></span>
        <I n="delX" c="w-[13px] h-[13px] ml-[10px]" />
        <I n="copy" c="w-[15px] h-[15px] ml-[10px]" />
      </div>
      <div className="h-[299px] mr-[2px] border border-[#a0a0a0] bg-white pt-[2px]">
        <div className="flex items-center h-[16px] pl-[7px]">
          <Chev open />
          <I n="recBeam" c="w-[15px] h-[15px] ml-[8px]" />
          <span className="ml-[7px]">识别梁</span>
        </div>
        {["CTL-02", "CTL-02-1100", "CTL-02a", "DL21(2A)", "DL20(2A)"].map((t, i) => (
          <div key={t} className="relative flex items-center h-[16px] pl-[40px]">
            <span className={`absolute left-[31px] top-0 border-l border-dotted border-[#777] ${i === 4 ? "h-[8px]" : "h-[16px]"}`} />
            <span className="absolute left-[32px] top-[8px] w-[8px] border-t border-dotted border-[#777]" />
            <span className={`flex items-center h-[16px] ${i === 4 ? "bg-[#d9d9d9]" : ""}`}>
              <I n="gear" c="w-[12px] h-[12px] mx-[3px]" />
              <span className={`ml-[3px] pr-[2px] ${i === 4 ? "bg-[#2a5caa] text-white" : ""}`}>{t}</span>
            </span>
          </div>
        ))}
      </div>
    </div>
  );
}

const thin: number[][] = [
  [791.5, 150, 791.5, 290], [791.5, 316, 791.5, 614], [800.5, 150, 800.5, 772], [809.5, 150, 809.5, 294], [809.5, 313, 809.5, 596],
  [944.5, 150, 944.5, 294], [944.5, 313, 944.5, 572], [944.5, 637, 944.5, 772], [951.5, 150, 951.5, 772], [963.5, 150, 963.5, 294], [963.5, 313, 963.5, 572], [963.5, 637, 963.5, 772],
  [1368.5, 150, 1368.5, 294], [1368.5, 313, 1368.5, 572], [1368.5, 637, 1368.5, 772], [1375.5, 150, 1375.5, 772], [1389.5, 150, 1389.5, 294], [1389.5, 313, 1389.5, 572], [1386.5, 637, 1386.5, 772],
  [809, 294.5, 945, 294.5], [963, 294.5, 1369, 294.5], [1389, 294.5, 1911, 294.5], [800, 303.5, 1911, 303.5], [809, 312.5, 945, 312.5], [963, 312.5, 1369, 312.5], [1389, 312.5, 1911, 312.5],
  [809, 596.5, 872, 596.5], [1052, 596.5, 1296, 596.5], [1476, 596.5, 1911, 596.5], [476, 605.5, 1911, 605.5], [791, 614.5, 814, 614.5], [831, 614.5, 872, 614.5], [1052, 614.5, 1296, 614.5], [1476, 614.5, 1566, 614.5], [1583, 614.5, 1911, 614.5],
  [813.5, 614, 813.5, 772], [822.5, 548, 822.5, 772], [831.5, 614, 831.5, 772],
  [1156.5, 480, 1156.5, 605], [1506.5, 200, 1506.5, 304],
  [1565.5, 614, 1565.5, 772], [1574.5, 605, 1574.5, 772], [1583.5, 614, 1583.5, 772],
  [1574, 702.5, 1911, 702.5], [1583, 712.5, 1911, 712.5], [675, 162.5, 790, 162.5],
];
function tickRows() {
  const out: number[][] = [];
  [276.5, 282.5, 290.5, 316.5, 323.5, 331.5].forEach((y) => {
    out.push([791, y, 810, y], [944, y, 964, y]);
  });
  [274.5, 281.5, 289.5, 318.5, 325.5, 332.5].forEach((y) => out.push([1368, y, 1390, y]));
  [675.5, 682.5, 689.5, 714.5, 721.5, 729.5].forEach((y) => out.push([1565, y, 1584, y]));
  [1547.5, 1554.5, 1562.5, 1587.5, 1594.5, 1601.5].forEach((x) => out.push([x, 596, x, 615]));
  return out;
}
const thick: number[][] = [
  [524, 150, 524, 772], [582, 150, 582, 772], [639, 150, 639, 772], [639, 304, 726, 304], [582, 605, 725, 605],
  [1369, 535, 1582, 535], [1375, 528, 1375, 588], [1575, 528, 1575, 588], [1583, 691, 1911, 691],
];

function Pad({ x, w, px, pw, s1, s2, sw }: { x: number; w: number; px: number; pw: number; s1: number; s2: number; sw: number }) {
  return (
    <g>
      <rect x={x} y={572.5} width={w} height={65} fill="#55f44f" stroke="#ffff00" strokeWidth="1.4" />
      <rect x={px} y={587.5} width={pw} height={36} fill="#7a00f0" stroke="#ffe9a0" />
      {[s1, s2].map((s) => (
        <g key={s}>
          <rect x={s} y={589.5} width={sw} height={32} fill="none" stroke="#ffff00" />
          <path d={`M${s + sw / 2} 572V637`} stroke="#ffff00" />
        </g>
      ))}
      <path d={`M${x} 605.500H${x + w}`} stroke="#ffff00" />
    </g>
  );
}

function Bubble({ x, y, t, wide }: { x: number; y: number; t: string; wide?: boolean }) {
  return (
    <g>
      <polygon points={`${x - 13},${y} ${x - 7},${y - 12} ${x + 7},${y - 12} ${x + 13},${y} ${x + 7},${y + 12} ${x - 7},${y + 12}`} fill="none" stroke="#0b8a0b" />
      <text x={x} y={y + 5} textAnchor="middle" fontSize={wide ? 15 : 14} fill="#cfcfcf" fontFamily="Liberation Sans">{t}</text>
    </g>
  );
}

function Canvas() {
  const txt = { fill: "#c8c8c8", fontSize: 15, fontFamily: "Liberation Sans", letterSpacing: "0.6px" };
  return (
    <div className="h-[622px] bg-black overflow-hidden">
      <svg viewBox="448 150 1463 622" className="w-[1463px] h-[622px] block">
        <path d="M585.500 150V772M692.500 150V772M678 590 709 621" stroke="#0b8a0b" fill="none" />
        <path d="M725 605H743" stroke="#0b6a20" strokeWidth="2" />
        {thin.concat(tickRows()).map((l, i) => (
          <line key={i} x1={l[0]} y1={l[1]} x2={l[2]} y2={l[3]} stroke="#ffff00" />
        ))}
        {thick.map((l, i) => (
          <line key={i} x1={l[0]} y1={l[1]} x2={l[2]} y2={l[3]} stroke="#ffff00" strokeWidth="2" />
        ))}
        <path d="M576 598 590 612M633 598 647 612M1372 536 1380 530M1571 536 1579 530" stroke="#ffff00" />
        <path d="M450 576A30 30 0 0 1 450 634" stroke="#ffff00" fill="none" />
        <Pad x={872.5} w={180} px={944.5} pw={36} s1={888.5} s2={1003.5} sw={32} />
        <Pad x={1296.5} w={179} px={1368.5} pw={35} s1={1312.5} s2={1427.5} sw={32} />
        <path d="M951.500 572V637M1375.500 572V637" stroke="#ffff00" />
        <Bubble x={800} y={163} t="2/01" wide />
        <Bubble x={951} y={163} t="1" />
        <Bubble x={1376} y={163} t="2" />
        <Bubble x={800} y={759} t="2/01" wide />
        <Bubble x={866} y={759} t="1/01" wide />
        <Bubble x={951} y={759} t="1" />
        <Bubble x={1376} y={759} t="2" />
        <Bubble x={464} y={605} t="K" />
        <g {...txt} className="whitespace-pre">
          <text x="1161" y="496">DL19 (2A)  250x750</text>
          <text x="1161" y="519">C8@100 (2)</text>
          <text x="1161" y="541">2C22</text>
          <text x="1161" y="563">G6C12</text>
          <text x="1512" y="217">L23 (3)  250x450</text>
          <text x="1512" y="239">C6@200 (2)</text>
          <text x="1512" y="262">2C22</text>
          <text transform="translate(662 320) rotate(-90)" fontSize="17">8400</text>
          <text transform="translate(1268 772) rotate(-90)">50x650</text>
          <text transform="translate(695 157) rotate(-90)" fontSize="14">L</text>
          <text transform="translate(710 157) rotate(-90)" fontSize="14">O</text>
          <text transform="translate(730 157) rotate(-90)" fontSize="14">2</text>
          <text transform="translate(749 157) rotate(-90)" fontSize="14">N</text>
        </g>
        <path d="M504 722V680" stroke="#00ff00" strokeWidth="4" />
        <path d="M500 682 504 673 508 682z" fill="#00ff00" />
        <path d="M504 722H545" stroke="#ff0000" strokeWidth="4" />
        <path d="M543 717 553 722 543 727z" fill="#ff0000" />
        <path d="M514 675 518 680 522 675M518 680V686" stroke="#00c000" fill="none" />
        <path d="M541 701 551 711M551 701 541 711" stroke="#e02020" />
      </svg>
    </div>
  );
}

function Tool({ n, t, c = "", off }: { n: string; t: string; c?: string; off?: boolean }) {
  return (
    <div className={`flex items-center shrink-0 whitespace-nowrap ${off ? "text-[#a8a8a8]" : "text-[#111]"} ${c}`}>
      <I n={n} c="w-[16px] h-[16px]" />
      <span className="ml-[4px]">{t}</span>
    </div>
  );
}

function Stepper() {
  return (
    <span className="flex flex-col gap-[3px] ml-[5px] shrink-0">
      <span className="w-0 h-0 border-x-[3px] border-x-transparent border-b-[3px] border-b-[#aaa]" />
      <span className="w-0 h-0 border-x-[3px] border-x-transparent border-t-[3px] border-t-[#aaa]" />
    </span>
  );
}

const Sep = ({ c = "" }: { c?: string }) => <span className={`w-px h-[22px] bg-[#a8a8a8] shrink-0 ${c}`} />;

const cols: [string, string, boolean?][] = [
  ["筋号", "w-[30px]", true], ["级别", "w-[29px]"], ["直径(mm)", "w-[53px]"], ["图号", "w-[33px]"], ["图形", "w-[200px]"],
  ["下料长度", "w-[54px]"], ["根数", "w-[29px]"], ["变径套筒规格", "w-[81px]"], ["接头个数", "w-[53px]"], ["总重(kg)", "w-[53px]"],
  ["钢筋归类", "w-[53px]"], ["搭接形式", "w-[54px]"], ["丝扣类型", "w-[53px]"], ["流水段", "w-[49px]"], ["备注", "w-[171px]"],
];

function BottomPanel() {
  return (
    <div className={`h-[234px] bg-[#f0f0f0] flex flex-col text-[12px] ${mono}`}>
      <div className={`ml-[2px] w-[891px] h-[28px] shrink-0 flex items-center whitespace-nowrap border-r border-b border-[#aaa] text-[#111] ${ui}`}>
        <Sep c="ml-[2px]" />
        <Tool n="ortho" t="正交" c="ml-[5px]" />
        <div className="ml-[4px] h-[26px] w-[74px] shrink-0 flex items-center border border-[#bbb] pl-[4px] bg-[#f7f7f7]"><Tool n="snap" t="对象捕捉" /></div>
        <div className="ml-[1px] h-[26px] w-[73px] shrink-0 flex items-center border border-[#bbb] pl-[2px] bg-[#f7f7f7]"><Tool n="dyn" t="动态输入" /></div>
        <Sep c="ml-[6px]" />
        <Tool n="cross" t="交点" c="ml-[8px]" />
        <Tool n="perp" t="垂点" c="ml-[6px]" />
        <div className="ml-[3px] h-[26px] w-[51px] shrink-0 flex items-center border border-[#bbb] pl-[4px] bg-[#f7f7f7]"><Tool n="mid" t="中点" /></div>
        <Tool n="vert" t="顶点" c="ml-[4px]" />
        <Tool n="coord" t="坐标" c="ml-[6px]" />
        <Sep c="ml-[4px]" />
        <div className="ml-[10px] w-[56px] h-[24px] shrink-0 bg-white flex items-center pl-[2px]">不偏移<span className="flex-1" /><span className="w-[9px] h-full bg-[#f0f0f0] flex items-center justify-center"><Caret c="text-[#222]" /></span></div>
        <Sep c="ml-[5px]" />
        <span className="ml-[3px] shrink-0 text-[#aaa]">X=</span>
        <div className="ml-[3px] w-[46px] h-[20px] shrink-0 border border-[#e2e2e2] text-right pr-[4px] text-[#888] leading-[18px]">0</div>
        <Stepper />
        <span className="ml-[4px] shrink-0 text-[#aaa]">mm</span>
        <span className="ml-[5px] shrink-0 text-[#aaa]">Y=</span>
        <div className="ml-[3px] w-[48px] h-[20px] shrink-0 border border-[#e2e2e2] text-right pr-[4px] text-[#888] leading-[18px]">0</div>
        <Stepper />
        <span className="ml-[4px] shrink-0 text-[#aaa]">mm</span>
        <Sep c="ml-[5px]" />
        <span className="ml-[4px] w-[11px] h-[11px] shrink-0 border border-[#888] bg-white" />
        <span className="ml-[9px] shrink-0">旋转</span>
        <div className="ml-[10px] w-[64px] h-[20px] shrink-0 border border-[#e2e2e2] text-right pr-[13px] text-[#888] leading-[18px]">0.000</div>
        <Stepper />
        <span className="ml-[4px] shrink-0 text-[#888]">°</span>
      </div>
      <div className="flex flex-1 min-h-0 mt-[3px]">
        <div className="w-[11px] shrink-0 border-r border-[#aaa] bg-[radial-gradient(#9fb6d2_1px,transparent_1px)] bg-[length:4px_4px]">
          <div className="h-[10px] bg-white border border-[#888]" />
        </div>
        <div className="flex-1 flex flex-col min-w-0">
          <div className={`h-[27px] w-[644px] shrink-0 flex items-center border-r border-b border-[#aaa] ${ui}`}>
            <I n="first" c="w-[13px] h-[14px] ml-[6px]" />
            <I n="prev" c="w-[13px] h-[14px] ml-[11px]" />
            <I n="next" c="w-[13px] h-[14px] ml-[11px]" />
            <I n="last" c="w-[13px] h-[14px] ml-[11px]" />
            <Sep c="ml-[6px]" />
            <I n="up" c="w-[13px] h-[13px] ml-[8px]" />
            <I n="down" c="w-[13px] h-[13px] ml-[11px]" />
            <Sep c="ml-[8px]" />
            <Tool n="ins" t="插入" off c="ml-[3px]" />
            <Tool n="del" t="删除" off c="ml-[6px]" />
            <Tool n="rInfo" t="钢筋信息" off c="ml-[7px]" />
            <Tool n="rLib" t="钢筋图库" off c="ml-[7px]" />
            <Tool n="other" t="其他" c="ml-[7px]" />
            <span className="ml-[4px]"><Caret c="text-[#222]" /></span>
            <span className="ml-[10px] text-[#111]">关闭</span>
            <Sep c="ml-[6px]" />
            <span className="ml-[11px] whitespace-nowrap text-[#111]">单构件钢筋总重(kg): 0</span>
          </div>
          <div className="flex-1 mt-[2px] bg-white border-t border-b-2 border-[#b0b0b0]">
            <div className="flex h-[19px] text-[#111]">
              <div className="w-[33px] bg-[#f2f2f2] border-r border-b border-[#bdbdbd]" />
              {cols.map(([t, w, on]) => (
                <div key={t} className={`${w} shrink-0 text-center leading-[18px] whitespace-nowrap overflow-hidden border-r border-b border-[#bdbdbd] ${on ? "bg-linear-to-b from-[#fbdfa5] to-[#f2c264] text-[#7a1a8a]" : "bg-linear-to-b from-white to-[#ededed]"}`}>{t}</div>
              ))}
            </div>
            <div className="flex h-[19px]">
              <div className="w-[33px] bg-[#ffd48a] text-[#7a1a8a] text-center leading-[18px] border-b border-[#bdbdbd]">1*</div>
              {cols.map(([t, w], i) => (
                <div key={t} className={`${w} shrink-0 ${i === 0 ? "bg-[#d8e9f9] border-2 border-[#808080]" : "border-r border-b border-[#bdbdbd]"}`} />
              ))}
            </div>
          </div>
        </div>
      </div>
    </div>
  );
}

function XIcon() {
  return (
    <svg viewBox="0 0 12 12" className="w-[11px] h-[11px]">
      <path d="M1 1l10 10M11 1 1 11M1 3.500 3.500 1M8.500 1 11 3.500M1 8.500 3.500 11M8.500 11 11 8.500" stroke="#5a6a7c" fill="none" strokeWidth="1.2" />
    </svg>
  );
}

function Dialog() {
  const fields: [string, string][] = [["梁名称:", "DL19(2A)"], ["类别:", "楼层框架梁"], ["截面宽:", "250"], ["截面高:", "750"], ["箍筋信息:", "C8@100(2)"], ["上下部通长筋:", "2C22"], ["梁侧面钢筋:", "G6C12"]];
  return (
    <div className={`absolute left-[390px] top-[17px] w-[249px] h-[302px] bg-[#dde8f5] border border-[#9fb3c9] text-[12px] text-[#111] shadow-[1px_1px_2px_#777] ${mono}`}>
      <div className="h-[28px] flex items-center pl-[15px] pr-[16px] text-[13px] text-[#6f88ad]">
        <span className="flex-1">梁集中标注信息</span>
        <XIcon />
      </div>
      <div className="mx-[6px] h-[266px] bg-[#cedcee] border border-[#8da7c4] pl-[8px] pt-[4px]">
        {fields.map(([l, v], i) => (
          <div key={l} className="flex items-center h-[28px]">
            <span className="w-[91px] shrink-0">{l}</span>
            {i === 1 ? (
              <div className="w-[127px] h-[20px] shrink-0 bg-[#dcdcdc] border border-[#a0a0a0] flex items-center pl-[3px] pr-[5px]">
                <span className="flex-1">{v}</span>
                <svg viewBox="0 0 10 6" className="w-[9px] h-[6px]"><path d="M1 1l4 4 4-4" stroke="#666" fill="none" /></svg>
              </div>
            ) : (
              <div className="w-[127px] h-[20px] shrink-0 bg-white border border-[#8e98a4] pl-[2px] leading-[17px]">{v}</div>
            )}
          </div>
        ))}
        <div className="flex items-center h-[28px]">
          <span className="w-[91px] shrink-0">标高:</span>
          <div className="w-[135px] h-[20px] shrink-0 bg-white border border-[#8e98a4]" />
        </div>
        <div className="flex mt-[4px] pl-[32px] gap-[27px]">
          <div className="w-[69px] h-[23px] rounded-[3px] bg-linear-to-b from-[#e6eef8] to-[#cfdded] border border-[#a8bcd2] text-center leading-[21px] text-[#3a5070]">确定(N)</div>
          <div className="w-[69px] h-[23px] rounded-[3px] bg-linear-to-b from-[#e6eef8] to-[#cfdded] border border-[#a8bcd2] text-center leading-[21px] text-[#3a5070]">取消(C)</div>
        </div>
      </div>
    </div>
  );
}

function FloatBar() {
  const combos: [string, string][] = [["首层", "w-[52px]"], ["CAD识别", "w-[66px]"], ["识别梁", "w-[67px]"], ["DL20(2A)", "w-[67px]"], ["分层1", "w-[69px]"]];
  return (
    <div className={`absolute left-[503px] top-[2px] w-[368px] h-[40px] bg-[#f0f0f0] border border-[#b0bcc8] border-t-[5px] border-t-[#a6bfdd] shadow-[1px_1px_1px_#888] flex gap-[5px] pl-[9px] pt-[4px] text-[13px] text-[#111] ${ui}`}>
      {combos.map(([t, w]) => (
        <div key={t} className={`${w} h-[21px] bg-white flex items-center pl-[2px] whitespace-nowrap overflow-hidden`}>
          <span className="flex-1 overflow-hidden">{t}</span>
          <span className="w-[9px] h-full bg-[#f0f0f0] flex items-center justify-center shrink-0"><Caret c="text-[#222]" /></span>
        </div>
      ))}
    </div>
  );
}

const attrs: { n: string; t: string; v?: string; box?: boolean; blue?: boolean; group?: boolean }[] = [
  { n: "1", t: "名称", v: "DL20(2A)" },
  { n: "2", t: "类别", v: "楼层框架梁", blue: true, box: true },
  { n: "3", t: "截面宽度(mm)", v: "250", box: true },
  { n: "4", t: "截面高度(mm)", v: "750", box: true },
  { n: "5", t: "轴线距梁左边线距", v: "(125)", box: true },
  { n: "6", t: "跨数量", v: "2A", box: true },
  { n: "7", t: "箍筋", v: " 虫8@100/200(2", blue: true, box: true },
  { n: "8", t: "肢数", v: "2", blue: true },
  { n: "9", t: "上部通长筋", v: "2虫22", blue: true, box: true },
  { n: "10", t: "下部通长筋", blue: true, box: true },
  { n: "11", t: "侧面纵筋", v: "G6虫12", blue: true, box: true },
  { n: "12", t: "拉筋", v: "(中6)", blue: true, box: true },
  { n: "13", t: "其它箍筋", blue: true },
  { n: "14", t: "箍筋增减", box: true },
  { n: "15", t: "备注", box: true },
  { n: "16", t: "梁编号" },
  { n: "17", t: "其它属性", group: true },
  { n: "26", t: "锚固搭接", group: true },
  { n: "41", t: "节点锚固", group: true },
  { n: "46", t: "显示样式", group: true },
];

function AttrPanel() {
  return (
    <div className={`absolute left-[1613px] top-[154px] w-[295px] h-[813px] bg-[#dde8f5] border border-[#9fb3c9] text-[12px] text-[#111] ${mono}`}>
      <div className="h-[28px] flex items-center pl-[16px] pr-[16px] text-[13px] text-[#6f88ad]">
        <span className="flex-1">属性编辑器</span>
        <XIcon />
      </div>
      <div className="ml-[6px] w-[282px] h-[778px] border-2 border-[#7f9cba] bg-white flex pl-px pt-[1px] relative">
        <div className="w-[259px] shrink-0">
          <div className="flex h-[23px] border-b border-[#bdbdbd]">
            <div className="w-[20px] bg-[#f0f0f0] border-r border-[#bdbdbd]" />
            <div className="w-[121px] bg-linear-to-b from-white to-[#ededed] border-r border-[#bdbdbd] text-center leading-[22px]">属性名称</div>
            <div className="w-[86px] bg-linear-to-b from-[#fbdfa5] to-[#f2c264] border-r border-[#bdbdbd] text-center leading-[22px] text-[#7a1a8a]">属性值</div>
            <div className="w-[31px] bg-linear-to-b from-white to-[#ededed] border-r border-[#bdbdbd] text-center leading-[22px]">附加</div>
          </div>
          {attrs.map((a, i) => (
            <div key={a.n} className="flex h-[19px] border-b border-[#bdbdbd]">
              <div className={`w-[20px] text-center leading-[18px] border-r border-[#bdbdbd] ${i === 0 ? "bg-[#ffd48a] text-[#7a1a8a]" : "bg-[#f2f2f2]"}`}>{a.n}</div>
              <div className={`w-[121px] flex items-center border-r border-[#bdbdbd] whitespace-nowrap ${i === 0 ? "bg-[#0078d7] text-white pl-[20px]" : a.group ? "text-[#888] pl-[2px]" : a.blue ? "text-[#0000f0] pl-[20px]" : "pl-[20px]"}`}>
                {a.group && <span className="w-[12px] h-[12px] mr-[6px] border border-[#888] text-[#333] flex items-center justify-center text-[12px] leading-none">+</span>}
                {a.t}
              </div>
              <div className={`w-[86px] pl-[2px] leading-[18px] whitespace-pre overflow-hidden border-r border-[#bdbdbd] ${i === 0 ? "bg-[#d6e8f8]" : ""}`}>{a.v}</div>
              <div className="w-[31px] flex items-center justify-center border-r border-[#bdbdbd]">
                {a.box && <span className="w-[13px] h-[13px] border border-[#444] bg-white" />}
              </div>
            </div>
          ))}
          <div className="mt-[9px] h-px w-[262px] ml-[5px] bg-[#aaa]" />
        </div>
        <div className="ml-px w-[16px] flex flex-col">
          <div className="h-[17px] bg-[#f0f0f0] flex items-center justify-center">
            <svg viewBox="0 0 10 6" className="w-[8px] h-[5px]"><path d="M1 5l4-4 4 4" stroke="#444" strokeWidth="1.4" fill="none" /></svg>
          </div>
          <div className="h-[559px] bg-[#cdcdcd]" />
          <div className="flex-1 bg-[#f7f7f7]" />
        </div>
      </div>
    </div>
  );
}

const layers = ["轴线", "轴线标识", "柱边线", "柱标识", "钢筋线", "混凝土墙边线", "砌块墙边线", "墙标识", "门窗洞标识", "梁边线", "梁集中标注", "梁原位标注", "板/筏板钢筋线", "板/筏板钢筋线标注", "独立基础边线", "独立基础标识", "桩承台边线", "桩承台标识", "桩边线", "桩标识", "吊筋", "支座线", "门窗线", "隔墙边线", "板洞线"];

function LayerPanel() {
  return (
    <div className={`absolute left-[1628px] top-[600px] w-[261px] h-[430px] bg-[#dde8f5] border border-[#9fb3c9] text-[12px] text-[#111] ${mono}`}>
      <div className="h-[28px] flex items-center pl-[16px] pr-[16px] text-[13px] text-[#6f88ad]">
        <span className="flex-1">CAD图层显示</span>
        <XIcon />
      </div>
      <div className="ml-[7px] w-[248px] h-[400px] border-2 border-[#7f9cba] bg-white pt-[1px]">
        <div className="flex items-center h-[14px] pl-[8px]">
          <Chev open />
          <span className="ml-[6px] w-[13px] h-[13px] border border-[#444] flex items-center justify-center"><span className="w-[7px] h-[7px] bg-[#444]" /></span>
          <span className="ml-[3px] leading-[14px]">已提取的CAD图层</span>
        </div>
        {layers.map((t, i) => (
          <div key={t} className="relative flex items-center h-[14px] pl-[43px]">
            <span className="absolute left-[13px] top-0 border-l border-dotted border-[#777] h-[14px]" />
            <span className={`absolute left-[32px] top-0 border-l border-dotted border-[#777] ${i === 24 ? "h-[7px]" : "h-[14px]"}`} />
            <span className="absolute left-[33px] top-[7px] w-[9px] border-t border-dotted border-[#777]" />
            <span className="relative w-[13px] h-[13px] border border-[#444] bg-white shrink-0">
              {(i === 9 || i === 10) && (
                <svg viewBox="0 0 11 11" className="absolute inset-0 w-[11px] h-[11px]"><path d="M1 5l3 3 6-6" stroke="#555" strokeWidth="1.4" fill="none" /></svg>
              )}
            </span>
            <span className="ml-[3px] leading-[14px] whitespace-nowrap">{t}</span>
          </div>
        ))}
        <div className="flex items-center h-[14px] pl-[8px]">
          <Chev />
          <span className="ml-[6px] w-[13px] h-[13px] border border-[#444] bg-white" />
          <span className="ml-[3px] leading-[14px]">CAD原始图层</span>
        </div>
      </div>
    </div>
  );
}

function StatusBar() {
  const cells: [string, string][] = [["X=1543 Y=79161", "w-[143px]"], ["层高:1.8", "w-[77px]"], ["底标高: 0.0", "w-[99px]"], ["0", "w-[47px]"], ["按鼠标左键选择梁的起跨和支跨，也可以连续选择梁的全跨，按右键确定或ESC取消", "w-[760px]"]];
  return (
    <div className={`h-[9px] flex bg-[#f0f0f0] gap-[2px] text-[12px] text-[#111] ${mono}`}>
      {cells.map(([t, w]) => (
        <div key={w} className={`${w} h-[20px] border border-[#aaa] pl-[2px] leading-[18px] whitespace-nowrap`}>{t}</div>
      ))}
    </div>
  );
}

export default function App() {
  return (
    <div className={`relative w-[1911px] h-[1015px] overflow-hidden bg-white flex flex-col ${ui}`}>
      <TopBar />
      <Ribbon />
      <div className="h-[4px] shrink-0 bg-white" />
      <div className="flex h-[856px] shrink-0 bg-[#f0f0f0]">
        <SideTabs />
        <TreePanel />
        <MiddleColumn />
        <div className="flex-1 min-w-0 flex flex-col">
          <Canvas />
          <BottomPanel />
        </div>
      </div>
      <StatusBar />
      <FloatBar />
      <Dialog />
      <AttrPanel />
      <LayerPanel />
    </div>
  );
}
